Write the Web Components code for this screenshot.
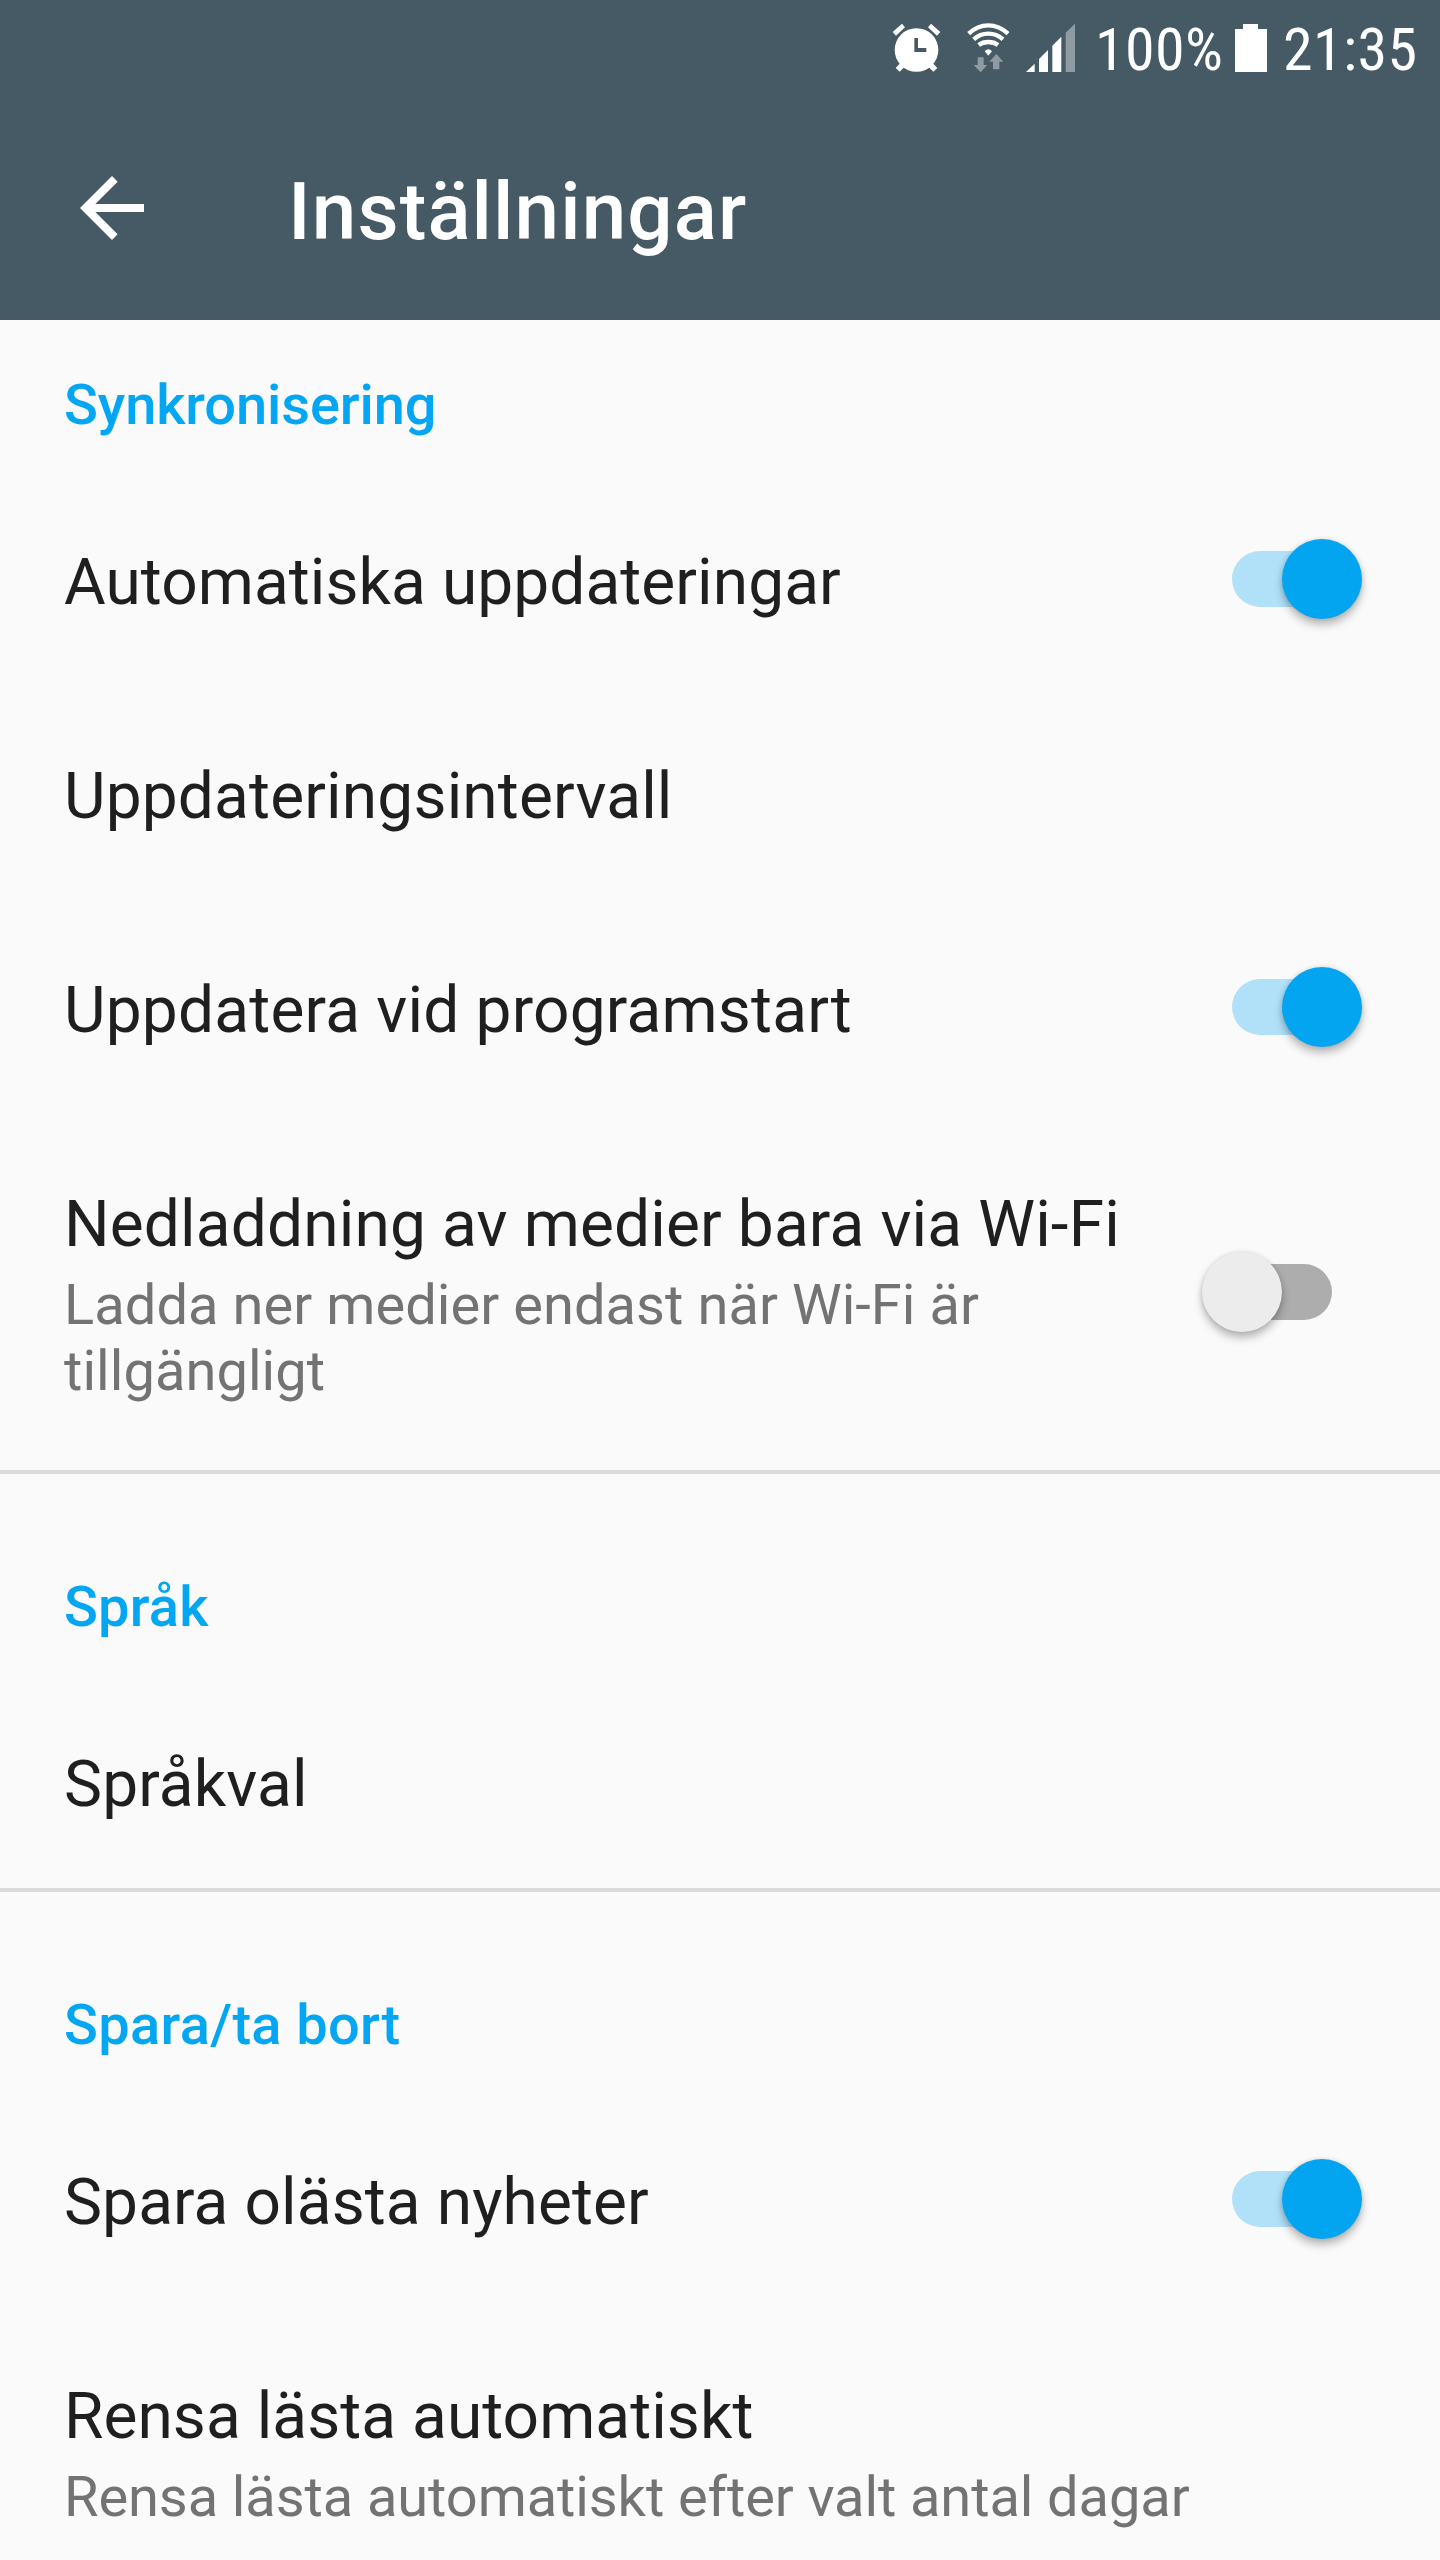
<!DOCTYPE html>
<html lang="sv">
<head>
<meta charset="utf-8">
<title>Inställningar</title>
<style>
html,body{margin:0;padding:0}
body{width:1440px;height:2560px;overflow:hidden;background:#fafafa;font-family:Roboto,"Liberation Sans",sans-serif}
</style>
</head>
<body>
<settings-screen></settings-screen>
<script>
function define(name, html) {
  const tpl = document.createElement('template');
  tpl.innerHTML = html;
  customElements.define(name, class extends HTMLElement {
    constructor() {
      super();
      this.attachShadow({ mode: 'open' }).appendChild(tpl.content.cloneNode(true));
    }
  });
}

define('status-bar', `
<style>
:host{display:flex;height:100px;padding-left:890px;align-items:flex-start;color:#fff;font-family:"Roboto Condensed",Roboto,sans-serif;font-size:60px;line-height:70px;letter-spacing:.4px}
svg{display:block;flex:none;margin-top:10px}
span{display:block;white-space:nowrap;flex:none;margin-top:15px}
.pct{width:137px;margin-left:5px}
.time{margin-left:11px}
</style>
<svg width="70" height="80" viewBox="30 0 210 240" fill="#fff">
  <circle cx="109.5" cy="120" r="65.5"/>
  <path d="M38 66L66 41L75 52L48 77ZM181 66L153 41L144 52L171 77ZM47 174L64 156L77 167L59 185ZM172 174L155 156L142 167L160 185Z"/>
  <path d="M103 84H114V114H139V126H103Z" fill="#455a64"/>
</svg>
<svg width="60" height="80" viewBox="240 0 180 240">
  <g fill="none" stroke="#fff" stroke-width="13">
    <path d="M266 71Q292 46 325 46T384 71"/>
    <path d="M281 88Q300 71 325 71T369 88"/>
    <path d="M296 105Q308 96 325 96T354 105"/>
  </g>
  <path d="M314 124Q325 112 336 124L325 137Z" fill="#fff"/>
  <path d="M293 142H311V165H322L302 187L281 165H293ZM339 178V155H328L349 132L370 155H358V178Z" fill="#8f9ba2"/>
</svg>
<svg width="70" height="80" viewBox="420 0 210 240" fill="#fff">
  <path d="M438 186L464 161V186ZM477 186V147L504 120V186ZM517 186V107L544 80V186Z"/>
  <path d="M557 186V68L585 41V186Z" fill="#8f9ba2"/>
</svg>
<span class="pct">100%</span>
<svg width="40" height="80" viewBox="0 0 40 80" fill="#fff"><path d="M3 19H11V14H26V19H35V62H3Z"/></svg>
<span class="time">21:35</span>
`);

define('app-bar', `
<style>
:host{display:flex;height:220px;align-items:flex-start;color:#fff}
svg{display:block;margin:60px 0 0 64px;flex:none}
h1{margin:65px 0 0 128px;font-size:80px;line-height:94px;font-weight:500;white-space:nowrap;letter-spacing:1.1px}
</style>
<svg width="96" height="96" viewBox="0 0 24 24" fill="#fff"><path d="M20 11H7.83l5.59-5.59L12 4l-8 8 8 8 1.41-1.41L7.83 13H20v-2z"/></svg>
<h1><slot></slot></h1>
`);

define('toggle-switch', `
<style>
:host{display:flex;width:160px;height:80px;align-items:center;flex:none}
.track{display:flex;align-items:center;width:100px;height:56px;margin:0 30px;border-radius:28px;background:#b0e1f9}
.thumb{flex:none;width:80px;height:80px;border-radius:50%;background:#04a5f0;margin-left:50px;box-shadow:0 6px 8px rgba(0,0,0,.26),0 0 5px rgba(0,0,0,.12)}
:host([off]) .track{background:#adadad}
:host([off]) .thumb{background:#ececec;margin-left:-30px}
</style>
<div class="track"><div class="thumb"></div></div>
`);

define('settings-item', `
<style>
:host{display:flex;align-items:center;padding:0 78px 0 64px}
.text{flex:1;padding:71px 0 66px}
.title{display:block;font-size:64px;line-height:75px;color:#1f1f1f;padding-bottom:2px;white-space:nowrap;letter-spacing:var(--title-spacing,.1px)}
::slotted([slot=summary]){display:block;margin-top:8px;font-size:56px;line-height:66px;color:#737373;letter-spacing:var(--summary-spacing,0)}
::slotted([slot=control]){margin-top:-4px;margin-left:64px}
::slotted([slot=control][off]){margin-top:-2px}
</style>
<div class="text"><span class="title"><slot></slot></span><slot name="summary"></slot></div>
<slot name="control"></slot>
`);

define('settings-group', `
<style>
:host{display:block;border-bottom:4px solid #dbdbdb}
:host(:last-of-type){border-bottom:0}
h2{margin:0;padding:100px 64px 36px;font-size:56px;line-height:66px;font-weight:500;color:#03a6f2;letter-spacing:var(--heading-spacing,0)}
:host([first]) h2{padding-top:52px}
:host([compact]) .items{height:212px}
</style>
<h2><slot name="heading"></slot></h2>
<div class="items"><slot></slot></div>
`);

define('settings-screen', `
<style>
:host{display:flex;flex-direction:column;width:1440px;height:2560px;overflow:hidden;background:#fafafa}
header{background:#455a64;height:320px;flex:none}
main{flex:none}
</style>
<header><status-bar></status-bar><app-bar>Inställningar</app-bar></header>
<main>
  <settings-group first style="--heading-spacing:-.1px">
    <span slot="heading">Synkronisering</span>
    <settings-item style="--title-spacing:.07px">Automatiska uppdateringar<toggle-switch slot="control"></toggle-switch></settings-item>
    <settings-item style="--title-spacing:.16px">Uppdateringsintervall</settings-item>
    <settings-item style="--title-spacing:.2px">Uppdatera vid programstart<toggle-switch slot="control"></toggle-switch></settings-item>
    <settings-item style="--title-spacing:.14px;--summary-spacing:.06px">Nedladdning av medier bara via Wi-Fi<span slot="summary">Ladda ner medier endast när Wi-Fi är tillgängligt</span><toggle-switch off slot="control"></toggle-switch></settings-item>
  </settings-group>
  <settings-group compact style="--heading-spacing:.2px">
    <span slot="heading">Språk</span>
    <settings-item style="--title-spacing:.15px">Språkval</settings-item>
  </settings-group>
  <settings-group style="--heading-spacing:.33px">
    <span slot="heading">Spara/ta bort</span>
    <settings-item>Spara olästa nyheter<toggle-switch slot="control"></toggle-switch></settings-item>
    <settings-item style="--title-spacing:.05px;--summary-spacing:-.09px">Rensa lästa automatiskt<span slot="summary">Rensa lästa automatiskt efter valt antal dagar</span></settings-item>
  </settings-group>
</main>
`);
</script>
</body>
</html>
